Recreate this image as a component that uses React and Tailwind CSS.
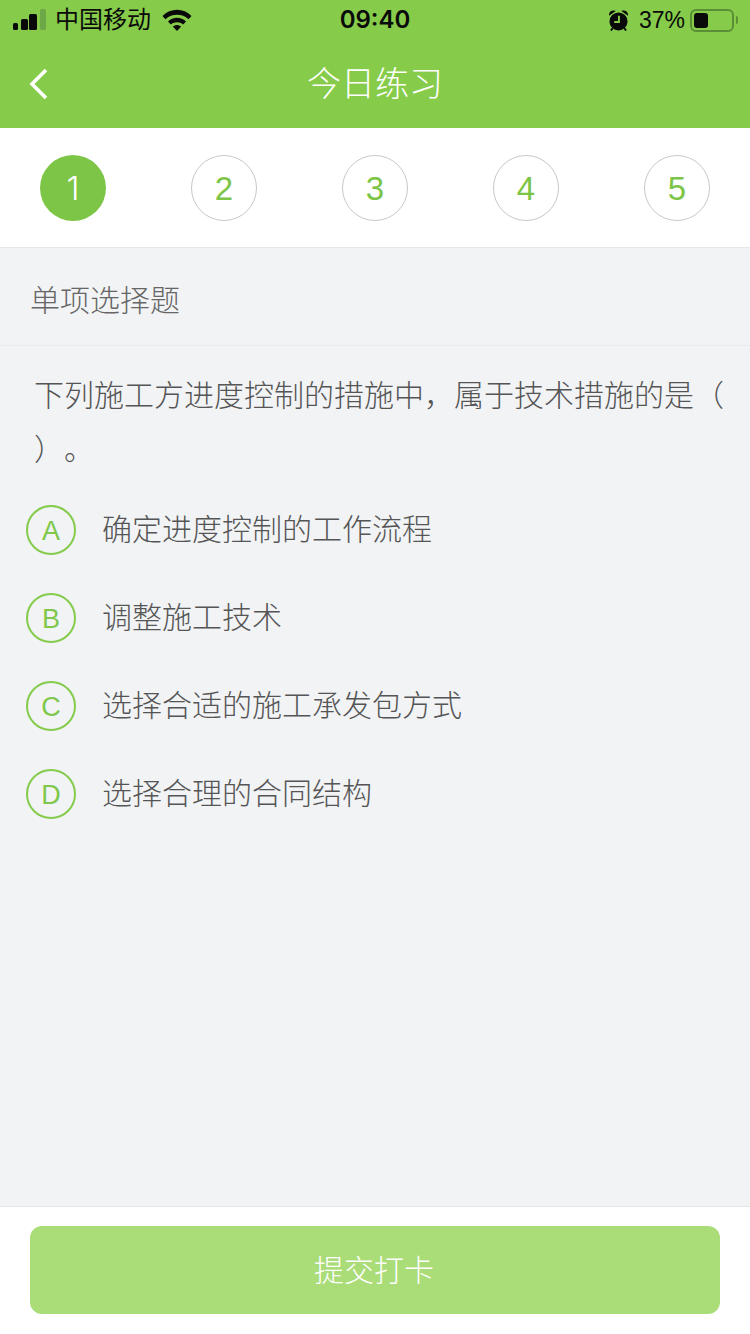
const font = { fontFamily: '"Liberation Sans", "Noto Sans CJK SC", sans-serif' }

const steps = [1, 2, 3, 4, 5]
const options = [
  { key: 'A', text: '确定进度控制的工作流程' },
  { key: 'B', text: '调整施工技术' },
  { key: 'C', text: '选择合适的施工承发包方式' },
  { key: 'D', text: '选择合理的合同结构' },
]

function Signal() {
  return (
    <svg width="34" height="22" viewBox="0 0 34 22" className="block">
      <rect x="0" y="14" width="5" height="7" rx="1.5" fill="#0a0a0a" />
      <rect x="8" y="10" width="7" height="11" rx="1.5" fill="#0a0a0a" />
      <rect x="16" y="5" width="8" height="16" rx="1.5" fill="#0a0a0a" />
      <rect x="27" y="0" width="6" height="21" rx="1.5" fill="#6ca848" />
    </svg>
  )
}

function Wifi() {
  return (
    <svg width="30" height="22" viewBox="0 0 30 22" className="block">
      <path d="M0.5 7C8.5 -1.5 21.5 -1.5 29.5 7L26.6 10.2C20.3 4.4 9.7 4.4 3.4 10.2Z" fill="#0a0a0a" />
      <path d="M6 12.6C11 7.6 19 7.6 24 12.6L21.2 15.6C17.8 12.6 12.2 12.6 8.8 15.6Z" fill="#0a0a0a" />
      <path d="M10.8 17.6C13.4 15.4 16.6 15.4 19.2 17.6L15 22Z" fill="#0a0a0a" />
    </svg>
  )
}

function Alarm() {
  return (
    <svg width="19" height="21" viewBox="0 0 20 22" className="block">
      <circle cx="10" cy="12" r="9.5" fill="#0a0a0a" />
      <path d="M0 6C-0.5 2 3 -0.5 7 1Z" fill="#0a0a0a" />
      <path d="M20 6C20.5 2 17 -0.5 13 1Z" fill="#0a0a0a" />
      <path d="M10.5 6V12.5H5.5" fill="none" stroke="#86cc4a" strokeWidth="2" />
      <path d="M4 19L2 21.5M16 19L18 21.5" stroke="#0a0a0a" strokeWidth="2" />
    </svg>
  )
}

function Battery() {
  return (
    <div className="flex items-center">
      <div className="flex h-[23px] w-[44px] items-center rounded-[6px] border-2 border-[#5a8f36] p-[2px]">
        <div className="h-full w-[14px] rounded-[3px] bg-[#0a0a0a]" />
      </div>
      <div className="ml-[2px] h-[8px] w-[2px] rounded-r-sm bg-[#5a8f36]" />
    </div>
  )
}

function StatusBar() {
  return (
    <div className="relative flex h-10 items-center justify-between pl-[13px] pr-[12px] text-[#0a0a0a]">
      <div className="flex items-center">
        <Signal />
        <span className="ml-[8px] text-[24px] leading-none">中国移动</span>
        <span className="ml-[11px]"><Wifi /></span>
      </div>
      <span className="absolute left-0 right-0 text-center font-['Inter'] text-[24px] font-semibold leading-none">09:40</span>
      <div className="flex items-center">
        <Alarm />
        <span className="ml-[11px] mr-[5px] text-[23px] leading-none">37%</span>
        <Battery />
      </div>
    </div>
  )
}

function NavBar() {
  return (
    <div className="relative flex h-[88px] items-center justify-center">
      <svg width="20" height="32" viewBox="0 0 20 32" className="absolute left-[29px] top-[28px]">
        <path d="M17 2L3 16L17 30" fill="none" stroke="#fff" strokeWidth="3.6" />
      </svg>
      <h1 className="text-[34px] font-light leading-none text-white">今日练习</h1>
    </div>
  )
}

function Steps() {
  return (
    <div className="flex h-[120px] items-start justify-between border-b border-[#e6e7e9] bg-white px-10 pt-[27px]">
      {steps.map((n) => (
        <div
          key={n}
          className={
            n === 1
              ? "flex h-[66px] w-[66px] items-center justify-center rounded-full bg-[#7dc547] pt-[2px] font-['Inter'] text-[33px] font-light text-white"
              : 'flex h-[66px] w-[66px] items-center justify-center rounded-full border border-[#c8c8c8] pt-[2px] text-[33px] text-[#7dc547]'
          }
        >
          {n}
        </div>
      ))}
    </div>
  )
}

function Option({ option }) {
  return (
    <div className="flex h-[88px] items-center pl-[26px]">
      <div className="flex h-[50px] w-[50px] items-center justify-center rounded-full border-2 border-[#85cb4c] pt-[2px] text-[27px] text-[#7fc84b]">
        {option.key}
      </div>
      <span className="ml-[26px] text-[30px] font-light leading-none text-[#555]">{option.text}</span>
    </div>
  )
}

export default function App() {
  return (
    <div className="flex h-[1334px] w-[750px] flex-col overflow-hidden bg-[#f2f3f5]" style={font}>
      <div className="bg-[#86cc4a]">
        <StatusBar />
        <NavBar />
      </div>
      <Steps />
      <div className="flex h-[98px] items-center border-b border-[#e9eaec] pl-[30px] pt-[9px] text-[30px] font-light leading-none text-[#666]">
        单项选择题
      </div>
      <p className="mt-[23px] pl-[34px] text-[30px] font-light leading-[54px] text-[#555] [text-spacing-trim:space-all]">
        下列施工方进度控制的措施中，属于技术措施的是（
        <br />
        ）。
      </p>
      <div className="mt-[9px] flex-1">
        {options.map((o) => (
          <Option key={o.key} option={o} />
        ))}
      </div>
      <div className="h-[128px] border-t border-[#e6e7e9] bg-white px-[30px] pt-[19px]">
        <button className="flex h-[88px] w-full items-center justify-center rounded-[12px] bg-[#aadc78] pr-[2px] text-[30px] font-light text-white">
          提交打卡
        </button>
      </div>
    </div>
  )
}
